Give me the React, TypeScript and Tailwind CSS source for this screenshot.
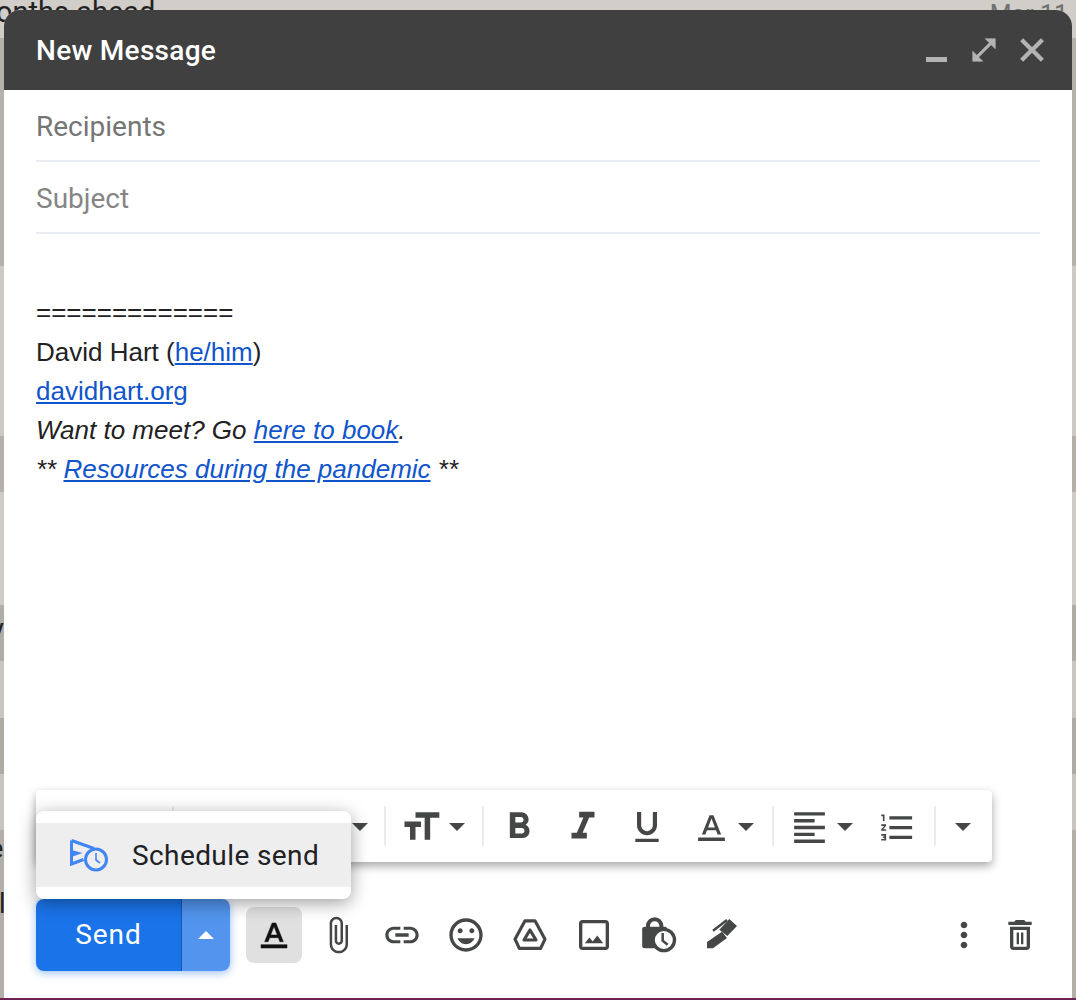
import React from 'react';

function Icon({ d, size = 40, bold = 0, className = '' }: { d: string; size?: number; bold?: number; className?: string }) {
  return (
    <svg width={size} height={size} viewBox="0 0 24 24" fill="currentColor" stroke={bold ? 'currentColor' : 'none'} strokeWidth={bold} className={`shrink-0 ${className}`}>
      <path d={d} />
    </svg>
  );
}

const paths = {
  close: 'M19 6.41L17.59 5 12 10.59 6.41 5 5 6.41 10.59 12 5 17.59 6.41 19 12 13.41 17.59 19 19 17.59 13.41 12z',
  expand: 'M21 11V3h-8l3.29 3.29-10 10L3 13v8h8l-3.29-3.29 10-10z',
  size: 'M9 4v3h5v12h3V7h5V4H9zm-6 8h3v7h3v-7h3V9H3v3z',
  bold: 'M15.6 10.79c.97-.67 1.65-1.77 1.65-2.79 0-2.26-1.75-4-4-4H7v14h7.04c2.09 0 3.71-1.7 3.71-3.79 0-1.52-.86-2.82-2.15-3.42zM10 6.5h3c.83 0 1.5.67 1.5 1.5s-.67 1.5-1.5 1.5h-3v-3zm3.5 9H10v-3h3.5c.83 0 1.5.67 1.5 1.5s-.67 1.5-1.5 1.5z',
  italic: 'M10 4v3h2.21l-3.42 8H6v3h8v-3h-2.21l3.42-8H18V4z',
  underline: 'M12 17c3.31 0 6-2.69 6-6V3h-2.5v8c0 1.93-1.57 3.5-3.5 3.5S8.5 12.93 8.5 11V3H6v8c0 3.31 2.69 6 6 6zm-7 2v2h14v-2H5z',
  color: 'M10.6 3L5 17h2.6l1.1-3h6.6l1.1 3h2.6L13.4 3h-2.8zM9.5 12L12 5.4 14.5 12h-5zM2.25 19.25h19.5v2.5H2.25z',
  align: 'M15 15H3v2h12v-2zm0-8H3v2h12V7zM3 13h18v-2H3v2zm0 8h18v-2H3v2zM3 3v2h18V3H3z',
  list: 'M2 17h2v.5H3v1h1v.5H2v1h3v-4H2v1zm1-9h1V4H2v1h1v3zm-1 3h1.8L2 13.1v.9h3v-1H3.2L5 10.9V10H2v1zm5-6v2h14V5H7zm0 14h14v-2H7v2zm0-6h14v-2H7v2z',
  clip: 'M16.5 6v11.5c0 2.21-1.79 4-4 4s-4-1.79-4-4V5c0-1.38 1.12-2.5 2.5-2.5s2.5 1.12 2.5 2.5v10.5c0 .55-.45 1-1 1s-1-.45-1-1V6H10v9.5c0 1.38 1.12 2.5 2.5 2.5s2.5-1.12 2.5-2.5V5c0-2.21-1.79-4-4-4S7 2.79 7 5v12.5c0 3.04 2.46 5.5 5.5 5.5s5.5-2.46 5.5-5.5V6h-1.5z',
  link: 'M3.9 12c0-1.71 1.39-3.1 3.1-3.1h4V7H7c-2.76 0-5 2.24-5 5s2.24 5 5 5h4v-1.9H7c-1.71 0-3.1-1.39-3.1-3.1zM8 13h8v-2H8v2zm9-6h-4v1.9h4c1.71 0 3.1 1.39 3.1 3.1s-1.39 3.1-3.1 3.1h-4V17h4c2.76 0 5-2.24 5-5s-2.24-5-5-5z',
  emoji: 'M11.99 2C6.47 2 2 6.48 2 12s4.47 10 9.99 10C17.52 22 22 17.52 22 12S17.52 2 11.99 2zM12 20c-4.42 0-8-3.58-8-8s3.58-8 8-8 8 3.58 8 8-3.58 8-8 8zm3.5-9c.83 0 1.5-.67 1.5-1.5S16.33 8 15.5 8 14 8.67 14 9.5s.67 1.5 1.5 1.5zm-7 0c.83 0 1.5-.67 1.5-1.5S9.33 8 8.5 8 7 8.67 7 9.5 7.67 11 8.5 11zm3.5 6.5c2.33 0 4.31-1.46 5.11-3.5H6.89c.8 2.04 2.78 3.5 5.11 3.5z',
  photo: 'M19 3H5c-1.1 0-2 .9-2 2v14c0 1.1.9 2 2 2h14c1.1 0 2-.9 2-2V5c0-1.1-.9-2-2-2zm0 16H5V5h14v14zm-5.04-6.71l-2.75 3.54-1.96-2.36L6.5 17h11l-3.54-4.71z',
  more: 'M12 8c1.1 0 2-.9 2-2s-.9-2-2-2-2 .9-2 2 .9 2 2 2zm0 2c-1.1 0-2 .9-2 2s.9 2 2 2 2-.9 2-2-.9-2-2-2zm0 6c-1.1 0-2 .9-2 2s.9 2 2 2 2-.9 2-2-.9-2-2-2z',
  trash: 'M6 19c0 1.1.9 2 2 2h8c1.1 0 2-.9 2-2V7H6v12zM8 9h8v10H8V9zm7.5-5l-1-1h-5l-1 1H5v2h14V4zM10 10.5h1.4v7H10zM12.6 10.5H14v7h-1.4z',
};

function Caret({ className = '' }: { className?: string }) {
  return (
    <div className={`flex w-6 shrink-0 items-center justify-center ${className}`}>
      <div className="h-0 w-0 border-x-[8px] border-t-[8px] border-x-transparent border-t-[#444746]" />
    </div>
  );
}

function Sep({ className = '' }: { className?: string }) {
  return <div className={`mb-0.5 h-10 w-0.5 shrink-0 self-center bg-[#e8eaed] ${className}`} />;
}

function Slot({ children, className = 'w-16' }: { children: React.ReactNode; className?: string }) {
  return <div className={`flex shrink-0 items-center justify-center ${className}`}>{children}</div>;
}

function DriveIcon() {
  return (
    <svg width="40" height="40" viewBox="0 0 24 24" fill="none" stroke="currentColor" strokeWidth="1.9" strokeLinejoin="round" className="shrink-0">
      <path d="M9 3.5h6l6 11-2.6 5.5H5.6L3 14.5z" />
      <path d="M12 9l3.6 6H8.4z" />
    </svg>
  );
}

function LockClockIcon() {
  return (
    <svg width="40" height="40" viewBox="0 0 24 24" className="shrink-0">
      <path d="M6 8V6.5a4 4 0 0 1 8 0V8" fill="none" stroke="#444746" strokeWidth="2.4" />
      <rect x="2.5" y="7" width="15" height="13" rx="1.5" fill="#444746" />
      <circle cx="15.5" cy="15" r="6.4" fill="#fff" stroke="#444746" strokeWidth="2" />
      <path d="M14.8 10.8v4.6l3 2.4" fill="none" stroke="#444746" strokeWidth="1.5" />
    </svg>
  );
}

function PenIcon() {
  return (
    <svg width="40" height="40" viewBox="0 0 24 24" fill="#444746" className="shrink-0">
      <path d="M3 20v-3.8L12 10l3 3.8-8.4 6.2z" />
      <path d="M10.4 8.8l6-6.4 4.6 4.2-5.8 6z" />
      <path d="M6.6 9.4L15 3" fill="none" stroke="#444746" strokeWidth="1.5" />
    </svg>
  );
}

function ScheduleIcon() {
  return (
    <svg width="40" height="36" viewBox="0 0 40 36" fill="none" className="shrink-0">
      <path d="M2.5 3.5V27l12-4.5M2.5 3.5L25 11.5" stroke="#4285f4" strokeWidth="3" />
      <path d="M2.5 13l11 3-11 4z" fill="#4285f4" />
      <circle cx="27" cy="22.5" r="10.5" stroke="#4285f4" strokeWidth="3" />
      <path d="M27 16v7l4 3" stroke="#4285f4" strokeWidth="1.6" />
    </svg>
  );
}

// gmail list that shows around the compose window
const rows = [
  { cls: 'h-[38px] bg-[#d1cdc8] text-[29px] leading-[29px]', leftCls: '-ml-[4px] -mt-[2px]', left: 'onths ahead', right: 'Mar 11' },
  { cls: 'h-[228px] bg-[#b5b1ab]' },
  { cls: 'h-[170px] bg-[#cdc9c4]' },
  { cls: 'h-[56px] bg-[#b5afa9]' },
  { cls: 'h-[113px] bg-[#cfcbc6]' },
  { cls: 'h-[56px] bg-[#b0aca6]', leftCls: '-ml-[9px] mt-[11px]', left: 'y' },
  { cls: 'h-[57px] bg-[#c9c5c1]' },
  { cls: 'h-[56px] bg-[#aeaba6]' },
  { cls: 'h-[56px] bg-[#c8c5c0]' },
  { cls: 'h-[57px] bg-[#b3aea8]', leftCls: '-ml-[11px] mt-[6px]', left: 'e' },
  { cls: 'h-[111px] bg-[#b3aea8]', leftCls: '-ml-[1px] mt-[4px]', left: 'l' },
];

export default function App() {
  return (
    <div className="relative flex h-[1000px] w-[1076px] flex-col overflow-hidden [font-family:Roboto,sans-serif]">
      {/* background list */}
      <div className="absolute inset-0 flex flex-col">
        {rows.map((r, i) => (
          <div key={i} className={`flex justify-between pr-2 text-[27px] leading-[27px] text-[#222] ${r.cls}`}>
            <span className={r.leftCls}>{r.left}</span>
            {r.right && <span className="text-[25px] text-[#70706e]">{r.right}</span>}
          </div>
        ))}
      </div>

      {/* compose window */}
      <div className="relative mx-1 mt-[10px] flex flex-1 flex-col rounded-t-2xl bg-white">
        <div className="flex h-20 shrink-0 items-center justify-between rounded-t-2xl bg-[#404040] pl-8 pr-4">
          <span className="pt-0.5 text-[28px] font-medium tracking-[0.3px] text-white">New Message</span>
          <div className="flex text-[#b4b4b4]">
            <Slot className="w-12"><div className="mt-[19px] h-[5px] w-[21px] bg-[#b4b4b4]" /></Slot>
            <Slot className="w-12"><Icon d={paths.expand} size={30} bold={0.5} /></Slot>
            <Slot className="w-12"><Icon d={paths.close} size={38} bold={0.7} /></Slot>
          </div>
        </div>

        <div className="mx-8 flex h-[72px] shrink-0 items-center border-b-2 border-[#e9edf2] pt-1 text-[28px] text-[#757575]">Recipients</div>
        <div className="mx-8 flex h-[72px] shrink-0 items-center border-b-2 border-[#e9edf2] pt-1 text-[28px] text-[#858585]">Subject</div>

        <div className="mx-8 pt-[59px] text-[26px] leading-[39px] text-[#222] [font-family:'Liberation_Sans',Arial,sans-serif]">
          <div className="h-10">=============</div>
          <div>David Hart (<a className="text-[#1155cc] underline">he/him</a>)</div>
          <div><a className="text-[#1155cc] underline">davidhart.org</a></div>
          <div className="italic">Want to meet? Go <a className="text-[#1155cc] underline">here to book</a>.</div>
          <div className="italic">** <a className="text-[#1155cc] underline">Resources during the pandemic</a> **</div>
        </div>

        {/* bottom action row */}
        <div className="mb-[27px] mt-auto flex h-[72px] shrink-0 items-center pl-8 pr-6 text-[#444746]">
          <div className="flex h-[72px] w-[194px] shrink-0 overflow-hidden rounded-lg shadow-[0_2px_8px_rgba(26,115,232,0.45)]">
            <div className="flex w-[145px] items-center justify-center bg-[#1a73e8] text-[28px] tracking-[1px] text-white">Send</div>
            <div className="w-px bg-[#1557b0]" />
            <div className="flex flex-1 items-center justify-center bg-[#5294ee]">
              <div className="h-0 w-0 border-x-[8px] border-b-[8px] border-x-transparent border-b-white" />
            </div>
          </div>
          <div className="ml-4 flex h-14 w-14 shrink-0 items-center justify-center rounded-lg bg-[#e0e0e0] text-[#111]">
            <Icon d={paths.color} size={32} bold={0.4} />
          </div>
          <Slot className="ml-1 w-16"><Icon d={paths.clip} /></Slot>
          <Slot><Icon d={paths.link} /></Slot>
          <Slot><Icon d={paths.emoji} /></Slot>
          <Slot><DriveIcon /></Slot>
          <Slot><Icon d={paths.photo} /></Slot>
          <Slot><LockClockIcon /></Slot>
          <Slot><PenIcon /></Slot>
          <Slot className="ml-auto w-14"><Icon d={paths.more} /></Slot>
          <Slot className="w-14"><Icon d={paths.trash} /></Slot>
        </div>
      </div>

      {/* purple strip of the page below */}
      <div className="relative h-0.5 shrink-0 bg-[#6d2150]" />

      {/* floating formatting toolbar */}
      <div className="absolute left-9 top-[790px] flex h-[72px] w-[956px] rounded-[4px] bg-white pt-0.5 text-[#444746] shadow-[0_4px_10px_rgba(0,0,0,0.35)]">
        <div className="w-[136px] shrink-0" />
        <Sep />
        <Caret className="ml-[174px]" />
        <Sep className="ml-3" />
        <Slot className="ml-[17px] w-9"><Icon d={paths.size} size={44} /></Slot>
        <Caret className="ml-1.5" />
        <Sep className="ml-[13px]" />
        <Slot className="ml-[3px] w-16"><Icon d={paths.bold} size={44} /></Slot>
        <Slot><Icon d={paths.italic} size={46} /></Slot>
        <Slot><Icon d={paths.underline} size={40} /></Slot>
        <Slot className="ml-[9px] w-[46px]"><Icon d={paths.color} size={33} /></Slot>
        <Caret />
        <Sep className="ml-3.5" />
        <Slot className="ml-[17px] w-9"><Icon d={paths.align} size={41} /></Slot>
        <Caret className="ml-1.5" />
        <Slot className="ml-[22px] w-9"><Icon d={paths.list} size={39} /></Slot>
        <Sep className="ml-[19px]" />
        <Caret className="ml-[15px]" />
      </div>

      {/* schedule send popup */}
      <div className="absolute left-9 top-[811px] flex h-[88px] w-[315px] items-center rounded-lg bg-white shadow-[0_4px_18px_rgba(0,0,0,0.38)]">
        <div className="flex h-16 w-full items-center bg-[#eeeeee] pl-[33px]">
          <ScheduleIcon />
          <span className="ml-[23px] pt-0.5 text-[28px] tracking-[0.4px] text-[#202124]">Schedule send</span>
        </div>
      </div>
    </div>
  );
}
